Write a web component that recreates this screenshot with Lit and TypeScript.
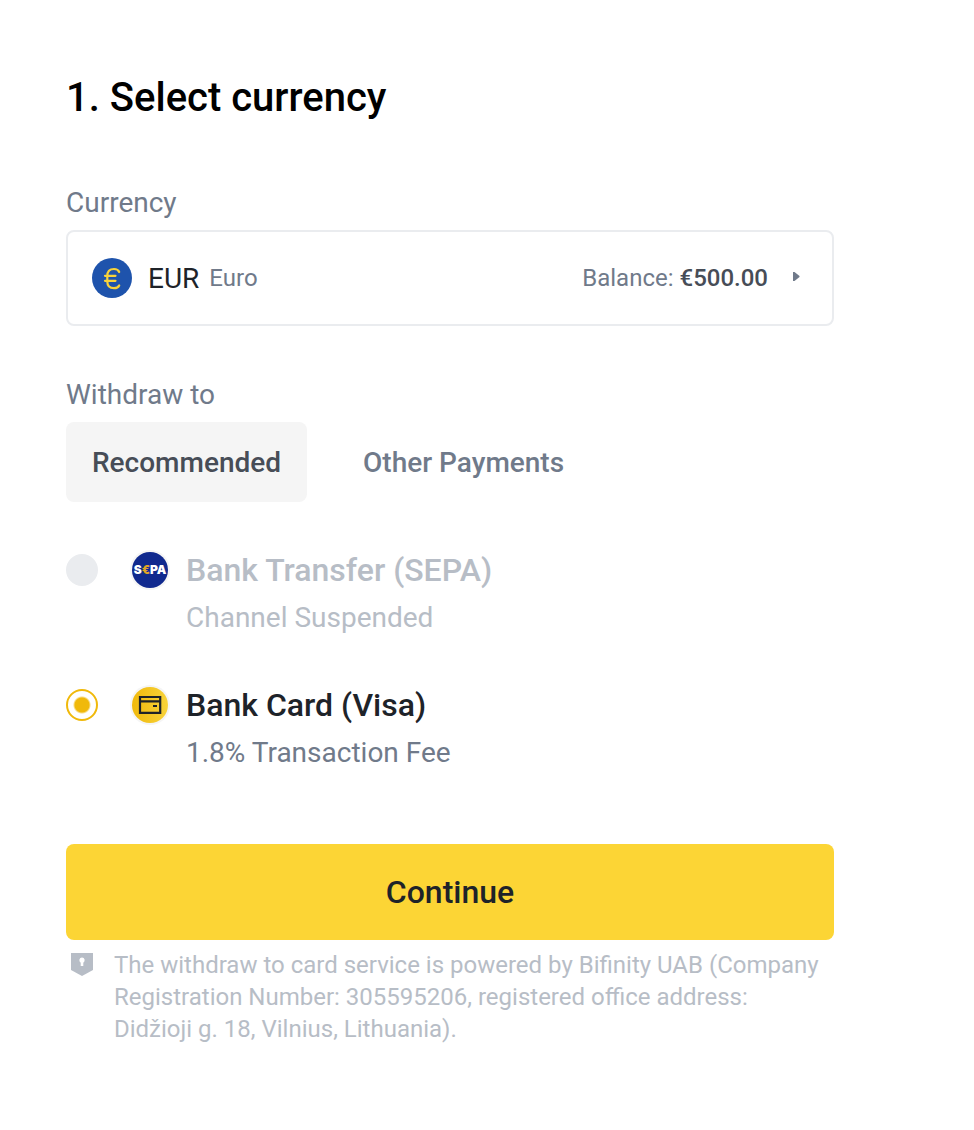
import { css, html, LitElement, svg } from 'lit';
import { customElement, state } from 'lit/decorators.js'
import { classMap } from 'lit/directives/class-map.js'

interface Channel {
  id: string
  title: string
  note: string
  disabled?: boolean
}

const CHANNELS: Channel[] = [
  { id: 'sepa', title: 'Bank Transfer (SEPA)', note: 'Channel Suspended', disabled: true },
  { id: 'visa', title: 'Bank Card (Visa)', note: '1.8% Transaction Fee' },
]

const TABS = ['Recommended', 'Other Payments']

const sepaIcon = svg`
  <circle cx="20" cy="20" r="20" fill="#f5f5f5"/>
  <circle cx="20" cy="20" r="18" fill="#10298e"/>
  <text x="20" y="24" text-anchor="middle" font-family="Inter, sans-serif" font-size="12" font-weight="900" fill="#fff">S<tspan fill="#e0a526">€</tspan>PA</text>
`

const cardIcon = svg`
  <defs>
    <linearGradient id="gold" x1="0" x2="1">
      <stop offset="0" stop-color="#f0b90b"/>
      <stop offset="1" stop-color="#f8d33a"/>
    </linearGradient>
  </defs>
  <circle cx="20" cy="20" r="20" fill="#f5f5f5"/>
  <circle cx="20" cy="20" r="18" fill="url(#gold)"/>
  <path d="M10 12h20.200v15.800H10z M10 16.300h20" fill="none" stroke="#1e2329" stroke-width="2.200"/>
  <path d="M23 20h4v2h-4z" fill="#1e2329"/>
`

@customElement('app-root')
export class AppRoot extends LitElement {
  @state()
  private tab = TABS[0]

  @state()
  private channel = 'visa'

  static styles = css`
  :host {
    display: block;
    font-family: Roboto, 'Liberation Sans', sans-serif;
    color: #1e2329;
    background: #fff;
  }
  main {
    padding: 70px 140px 70px 66px;
  }
  h1 {
    margin: 0 0 56px;
    font-size: 40px;
    line-height: 56px;
    font-weight: 500;
    color: #000;
  }
  button {
    font: inherit;
    color: inherit;
    border: 0;
    background: none;
    cursor: pointer;
  }
  svg {
    display: block;
    flex: none;
  }
  .label {
    display: block;
    padding-bottom: 6px;
    font-size: 28px;
    line-height: 42px;
    color: #707a8a;
  }
  .currency {
    display: flex;
    align-items: center;
    width: 100%;
    height: 96px;
    margin-bottom: 48px;
    padding: 0 24px;
    border: 2px solid #eaecef;
    border-radius: 8px;
    font-size: 24px;
    text-align: left;
  }
  .code {
    margin: 0 10px 0 16px;
    font-size: 28px;
  }
  .name {
    flex: 1;
    color: #707a8a;
  }
  .balance {
    margin-right: 16px;
    color: #707a8a;
  }
  .amount {
    font-weight: 500;
    color: #474d57;
  }
  .tabs {
    display: flex;
    gap: 30px;
    margin-bottom: 44px;
  }
  .tab {
    height: 80px;
    padding: 0 26px;
    border-radius: 8px;
    font-size: 28px;
    font-weight: 500;
    color: #707a8a;
  }
  .tab[aria-selected='true'] {
    background: #f5f5f5;
    color: #474d57;
  }
  .channels {
    display: grid;
    gap: 39px;
    margin-bottom: 67px;
  }
  .channel {
    display: grid;
    grid-template-columns: 32px 40px 1fr;
    align-items: center;
    column-gap: 32px;
    cursor: pointer;
  }
  .channel input {
    appearance: none;
    width: 32px;
    height: 32px;
    margin: 0;
    border: 2px solid #eaecef;
    border-radius: 50%;
  }
  .channel input:checked {
    border-color: #f0b90b;
    background: radial-gradient(circle, #f0b90b 7px, transparent 9px);
  }
  .channel input:disabled {
    background: #eaecef;
  }
  .title, .note {
    grid-column: 3;
    margin-left: -16px;
    line-height: 48px;
  }
  .title {
    font-size: 32px;
    font-weight: 500;
  }
  .note {
    font-size: 28px;
    color: #707a8a;
  }
  .channel.disabled {
    cursor: default;
  }
  .disabled .title, .disabled .note {
    color: #b7bdc6;
  }
  .continue {
    display: block;
    width: 100%;
    height: 96px;
    margin-bottom: 9px;
    border-radius: 8px;
    background: #fcd535;
    font-size: 32px;
    font-weight: 500;
  }
  .legal {
    display: flex;
    gap: 16px;
    padding-right: 6px;
    font-size: 24px;
    line-height: 32px;
    color: #b7bdc6;
  }
  .legal p {
    margin: 0;
  }
  `

  render() {
    return html`
    <main>
      <h1>1. Select currency</h1>

      <label class="label" for="currency">Currency</label>
      <button class="currency" id="currency" type="button">
        <svg width="40" height="40" viewBox="0 0 40 40" aria-hidden="true">
          <circle cx="20" cy="20" r="20" fill="#1e53ac"/>
          <path d="M27.200 14Q26 11 22 11Q15.300 11 15.300 18v5.500Q15.300 30.200 22 30.200Q26 30.200 27.200 27.500M13 17.800h10.500M13 22.800h10.500" fill="none" stroke="#f8d33a" stroke-width="2.200" stroke-linecap="round"/>
        </svg>
        <span class="code">EUR</span>
        <span class="name">Euro</span>
        <span class="balance">Balance: <span class="amount">€500.00</span></span>
        <svg width="24" height="24" viewBox="0 0 24 24" aria-hidden="true">
          <path d="M9 6h1.500l5 4v1l-5 4H9z" fill="#707a8a"/>
        </svg>
      </button>

      <span class="label" id="withdraw">Withdraw to</span>
      <div class="tabs" role="tablist" aria-labelledby="withdraw">
        ${TABS.map((tab) => html`
          <button class="tab" type="button" role="tab"
            aria-selected=${this.tab === tab ? 'true' : 'false'}
            @click=${() => { this.tab = tab }}>${tab}</button>
        `)}
      </div>

      <div class="channels" role="radiogroup" aria-labelledby="withdraw">
        ${CHANNELS.map((c) => this.renderChannel(c))}
      </div>

      <button class="continue" type="button">Continue</button>
      <div class="legal">
        <svg width="32" height="32" viewBox="0 0 32 32" aria-hidden="true">
          <path d="M5 4h22v17l-11 6-11-6z" fill="#b7bdc6"/>
          <path d="M16 8.500a2.800 2.800 0 0 1 1.300 5.200V17h-2.600v-3.300A2.800 2.800 0 0 1 16 8.500z" fill="#fff"/>
        </svg>
        <p>The withdraw to card service is powered by Bifinity UAB (Company Registration Number: 305595206, registered office address: Didžioji g. 18, Vilnius, Lithuania).</p>
      </div>
    </main>
    `
  }

  private renderChannel (c: Channel) {
    return html`
    <label class=${classMap({ channel: true, disabled: !!c.disabled })}>
      <input type="radio" name="channel" value=${c.id}
        .checked=${this.channel === c.id}
        ?disabled=${c.disabled}
        @change=${() => { this.channel = c.id }}>
      <svg width="40" height="40" viewBox="0 0 40 40" aria-hidden="true">
        ${c.id === 'sepa' ? sepaIcon : cardIcon}
      </svg>
      <span class="title">${c.title}</span>
      <span class="note">${c.note}</span>
    </label>
    `
  }
}
